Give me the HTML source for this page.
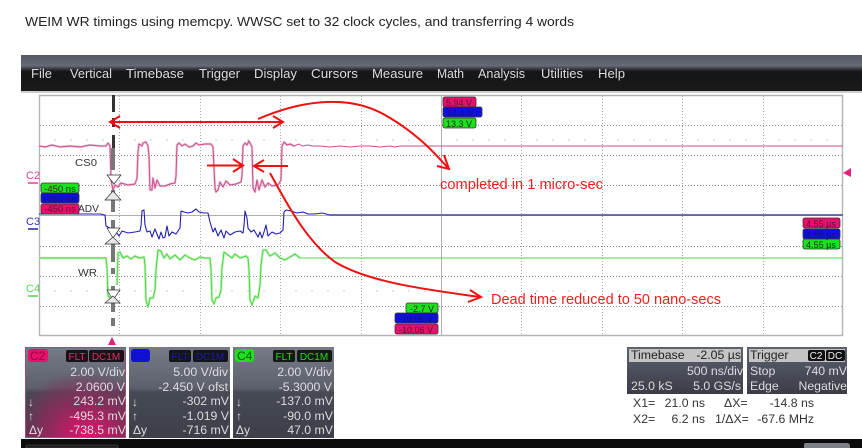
<!DOCTYPE html>
<html>
<head>
<meta charset="utf-8">
<style>
html,body{margin:0;padding:0;background:#fff;width:862px;height:448px;overflow:hidden}
svg{display:block;filter:blur(.3px)}
text{font-family:"Liberation Sans",sans-serif}
</style>
</head>
<body>
<svg width="862" height="448" viewBox="0 0 862 448" xmlns="http://www.w3.org/2000/svg">
<defs>
<linearGradient id="menu" x1="0" y1="0" x2="0" y2="1">
<stop offset="0" stop-color="#555968"/><stop offset=".3" stop-color="#666a76"/><stop offset=".38" stop-color="#3a3c44"/><stop offset=".46" stop-color="#141518"/><stop offset="1" stop-color="#1a1a1a"/>
</linearGradient>
<linearGradient id="panel" x1="0" y1="0" x2="0" y2="1">
<stop offset="0" stop-color="#777b88"/><stop offset=".45" stop-color="#5d606c"/><stop offset=".5" stop-color="#474a54"/><stop offset="1" stop-color="#3c3e48"/>
</linearGradient>
<radialGradient id="pink" cx=".6" cy="1" r=".75">
<stop offset="0" stop-color="#e8106e"/><stop offset=".5" stop-color="#8e2a5c"/><stop offset="1" stop-color="#8e2a5c" stop-opacity="0"/>
</radialGradient>
<linearGradient id="tb" x1="0" y1="0" x2="0" y2="1">
<stop offset="0" stop-color="#5d6170"/><stop offset="1" stop-color="#3a3c46"/>
</linearGradient>
</defs>

<rect width="862" height="448" fill="#fff"/>
<text x="25" y="26" font-size="13" fill="#222" textLength="549" lengthAdjust="spacingAndGlyphs">WEIM WR timings using memcpy. WWSC set to 32 clock cycles, and transferring 4 words</text>

<!-- menu bar -->
<rect x="21" y="55" width="841" height="36" fill="url(#menu)"/>
<rect x="21" y="91" width="841" height="2" fill="#ccc"/>
<g font-size="12.500" fill="#dcdcdc">
<text x="31" y="78" textLength="21" lengthAdjust="spacingAndGlyphs">File</text>
<text x="70" y="78" textLength="42" lengthAdjust="spacingAndGlyphs">Vertical</text>
<text x="126" y="78" textLength="58" lengthAdjust="spacingAndGlyphs">Timebase</text>
<text x="199" y="78" textLength="41" lengthAdjust="spacingAndGlyphs">Trigger</text>
<text x="254" y="78" textLength="43" lengthAdjust="spacingAndGlyphs">Display</text>
<text x="311" y="78" textLength="47" lengthAdjust="spacingAndGlyphs">Cursors</text>
<text x="372" y="78" textLength="51" lengthAdjust="spacingAndGlyphs">Measure</text>
<text x="437" y="78" textLength="27" lengthAdjust="spacingAndGlyphs">Math</text>
<text x="478" y="78" textLength="47" lengthAdjust="spacingAndGlyphs">Analysis</text>
<text x="541" y="78" textLength="42" lengthAdjust="spacingAndGlyphs">Utilities</text>
<text x="598" y="78" textLength="27" lengthAdjust="spacingAndGlyphs">Help</text>
</g>

<!-- grid -->
<g stroke="#a8a8a8" stroke-width="1" stroke-dasharray="1 2" fill="none">
<path d="M119.500 96V335M200.500 96V335M280.500 96V335M361.500 96V335M521.500 96V335M602.500 96V335M682.500 96V335M763.500 96V335"/>
<path d="M40 125.500H842M40 155.500H842M40 185.500H842M40 246.500H842M40 276.500H842M40 306.500H842" stroke="#888"/>
</g>
<path d="M441.500 96V335M40 215.500H842" stroke="#b0b0b0" stroke-width="1"/>
<path d="M39 95.500H843M39.500 95V336M39 335.500H843M842.500 95V336" stroke="#b4b4b4" stroke-width="1.400" fill="none"/>
<!-- ticks -->
<path d="M55 139v2M71 139v2M87 139v2M103 139v2M135 139v2M151 139v2M167 139v2M183 139v2M216 139v2M232 139v2M248 139v2M264 139v2M296 139v2M312 139v2M328 139v2M344 139v2M377 139v2M393 139v2M409 139v2M425 139v2M457 139v2M473 139v2M489 139v2M505 139v2M537 139v2M553 139v2M569 139v2M585 139v2M618 139v2M634 139v2M650 139v2M666 139v2M698 139v2M714 139v2M730 139v2M746 139v2M779 139v2M795 139v2M811 139v2M827 139v2" stroke="#ccc" stroke-width="1"/>
<path d="M55 290v2M71 290v2M87 290v2M135 290v2M151 290v2M167 290v2M183 290v2M216 290v2M232 290v2M248 290v2M264 290v2M296 290v2M312 290v2M328 290v2M344 290v2M377 290v2M393 290v2M409 290v2M425 290v2M457 290v2M473 290v2M489 290v2M505 290v2M537 290v2M553 290v2M569 290v2M585 290v2M618 290v2M634 290v2M650 290v2M666 290v2" stroke="#ccc" stroke-width="1"/>

<!-- pink trace -->
<g fill="none" stroke-linejoin="round">
<path d="M39 146L45 147L52 145L60 147L70 146L80 147L90 145L100 146L106 146L108 143L110 146L111 180L113 190L115 185L118 187L121 183L128 185L135 184L137 178L138 152L139 144L142 146L143 143L146 142L148 146L149 156L150 190L152 190L153 178L155 188L157 180L160 186L165 186L170 184L175 183L176 176L177 145L179 143L182 146L185 144L189 147L193 146L196 143L199 145L205 144L211 144L213 147L215 188L216 192L218 190L220 182L223 187L226 181L230 185L236 184L241 182L242 176L243 146L245 143L247 145L249 141L252 147L253 188L255 192L257 180L259 190L262 180L265 187L268 183L272 186L278 185L281 180L282 146L284 142L287 145L290 144L294 146" stroke="#e8a8c8" stroke-width="2.400" opacity=".7"/>
<path d="M39 146L45 147L52 145L60 147L70 146L80 147L90 145L100 146L106 146L108 143L110 146L111 180L113 190L115 185L118 187L121 183L128 185L135 184L137 178L138 152L139 144L142 146L143 143L146 142L148 146L149 156L150 190L152 190L153 178L155 188L157 180L160 186L165 186L170 184L175 183L176 176L177 145L179 143L182 146L185 144L189 147L193 146L196 143L199 145L205 144L211 144L213 147L215 188L216 192L218 190L220 182L223 187L226 181L230 185L236 184L241 182L242 176L243 146L245 143L247 145L249 141L252 147L253 188L255 192L257 180L259 190L262 180L265 187L268 183L272 186L278 185L281 180L282 146L284 142L287 145L290 144L294 146L299 144L302 146L308 145L312 146L320 146L330 147L340 146L350 147L360 146L370 146L380 147L390 146L395 147L400 146L843 146" stroke="#c8508c" stroke-width="1"/>

<!-- blue trace -->
<path d="M39 214L100 214L105 215L106 226L110 228L113 233L116 232L119 236L122 231L128 233L135 232L140 231L141 226L142 211L144 210L145 225L147 232L150 231L152 237L155 229L157 234L159 239L161 232L163 238L165 237L167 226L169 236L172 232L176 234L178 231L180 228L181 211L184 212L188 213L192 212L196 209L199 212L204 213L208 213L210 222L213 232L215 228L218 236L221 230L224 238L226 231L230 235L235 232L240 231L243 233L244 226L245 211L247 218L248 228L251 232L254 230L258 237L260 232L262 238L264 232L266 225L268 236L272 232L276 234L280 233L283 230L284 212L286 210L291 211L297 213L303 212L308 214L315 214L322 213L330 215L345 215L440 215L843 215" stroke="#2020b0" stroke-width="1.100"/>
<path d="M330 215H843" stroke="#5560a8" stroke-width="1.800"/>

<!-- green trace -->
<path d="M39 258L106 258L107 268L108 296L112 300M117 285L118 253L120 252L123 258L127 256L131 259L135 256L139 258L144 257L145 265L146 300L148 307L150 298L153 298L155 290L156 270L158 250L161 251L164 258L167 254L170 259L175 255L180 260L185 255L190 258L195 260L200 257L205 258L210 258L211 270L212 300L214 304L216 298L219 297L221 290L222 268L224 252L228 255L232 258L235 254L240 258L246 256L248 258L249 270L250 300L252 305L255 296L258 298L260 285L261 265L263 250L266 250L270 256L275 253L280 258L285 260L290 257L295 254L300 258" stroke="#c4f0b8" stroke-width="2.600"/>
<path d="M39 258L106 258L107 268L108 296L112 300M117 285L118 253L120 252L123 258L127 256L131 259L135 256L139 258L144 257L145 265L146 300L148 307L150 298L153 298L155 290L156 270L158 250L161 251L164 258L167 254L170 259L175 255L180 260L185 255L190 258L195 260L200 257L205 258L210 258L211 270L212 300L214 304L216 298L219 297L221 290L222 268L224 252L228 255L232 258L235 254L240 258L246 256L248 258L249 270L250 300L252 305L255 296L258 298L260 285L261 265L263 250L266 250L270 256L275 253L280 258L285 260L290 257L295 254L300 258L310 258L843 258" stroke="#48d848" stroke-width="1"/>
</g>

<!-- cursor -->
<path d="M113.500 95V112M113.500 118V127M113.500 135V148" stroke="#333" stroke-width="3" fill="none"/>
<path d="M113 148V170M113 190V212M113 220V230M113 240V262M113 268V274M113 286V312M113 318V326" stroke="#777" stroke-width="4" fill="none"/>
<g fill="#fff" stroke="#333" stroke-width=".7">
<path d="M107 175L121 175L114 184z"/><path d="M105 200L113 191L121 200z" fill="#e8e8e8"/>
<path d="M107 228L113 238L120 228z"/><path d="M105 244L113 237L120 244z" fill="#e8e8e8"/>
<path d="M107 290L120 290L113 300z"/><path d="M105 303L113 296L120 303z" fill="#e8e8e8"/>
</g>
<path d="M108 345L112 337L116 345z" fill="#e0207c"/>

<!-- labels -->
<g font-size="10.500" fill="#333">
<text x="75" y="166" textLength="22" lengthAdjust="spacingAndGlyphs">CS0</text>
<text x="78" y="212" textLength="21" lengthAdjust="spacingAndGlyphs">ADV</text>
<text x="78" y="276" textLength="19" lengthAdjust="spacingAndGlyphs">WR</text>
</g>
<g font-size="11">
<text x="26" y="179" fill="#c84a90">C2</text><path d="M28 183h10" stroke="#c84a90" stroke-width="1.500"/>
<text x="26" y="225" fill="#3838a8">C3</text><path d="M28 229h10" stroke="#2020b0" stroke-width="1.500"/>
<text x="26" y="292" fill="#58d858">C4</text><path d="M28 296h10" stroke="#48d848" stroke-width="1.500"/>
</g>
<path d="M851 168L843 173L851 177z" fill="#e8207c"/>

<!-- tags left -->
<g stroke="#333" stroke-width=".8">
<rect x="41" y="183" width="38" height="10" rx="2" fill="#1ee01e"/>
<rect x="41" y="193" width="38" height="10" rx="2" fill="#1010d8"/>
<rect x="41" y="204" width="38" height="10" rx="2" fill="#e8106c"/>
</g>
<g font-size="9.500" fill="#1a2a1a" text-anchor="middle">
<text x="60" y="192">-450 ns</text><text x="60" y="202" fill="#101080">-450 ns</text><text x="60" y="212" fill="#5a1030">-450 ns</text>
</g>
<!-- tags top -->
<g stroke="#333" stroke-width=".8">
<rect x="443" y="97" width="33" height="10" rx="2" fill="#e8106c"/>
<rect x="443" y="107" width="39" height="10" rx="2" fill="#1010d8"/>
<rect x="443" y="118" width="33" height="10" rx="2" fill="#1ee01e"/>
</g>
<g font-size="9" text-anchor="middle">
<text x="459" y="106" fill="#5a1030">5.94 V</text><text x="460" y="116" fill="#101080">14.4 V</text><text x="459" y="127" fill="#1a2a1a">13.3 V</text>
</g>
<!-- tags bottom -->
<g stroke="#333" stroke-width=".8">
<rect x="406" y="303" width="32" height="10" rx="2" fill="#1ee01e"/>
<rect x="395" y="313" width="43" height="10" rx="2" fill="#1010d8"/>
<rect x="395" y="324" width="43" height="10" rx="2" fill="#e8106c"/>
</g>
<g font-size="9" text-anchor="middle">
<text x="422" y="312" fill="#1a2a1a">-2.7 V</text><text x="416" y="322" fill="#101080">-10.06 V</text><text x="416" y="333" fill="#5a1030">-10.06 V</text>
</g>
<!-- tags right -->
<g stroke="#333" stroke-width=".8">
<rect x="803" y="218" width="37" height="10" rx="2" fill="#e8106c"/>
<rect x="803" y="229" width="37" height="10" rx="2" fill="#1010d8"/>
<rect x="803" y="239" width="37" height="10" rx="2" fill="#1ee01e"/>
</g>
<g font-size="9" text-anchor="middle">
<text x="821" y="227" fill="#5a1030">4.55 µs</text><text x="821" y="238" fill="#101080">4.55 µs</text><text x="821" y="248" fill="#1a2a1a">4.55 µs</text>
</g>

<!-- red annotations -->
<g fill="none" stroke="#f01010" stroke-width="2">
<path d="M111 122H283"/><path d="M120 116L110 122L120 128"/><path d="M273 116L283 122L273 128"/>
<path d="M258 119C295 103 345 92 385 115C415 132 432 150 448 168"/><path d="M444 155L449 169L437 166"/>
<path d="M207 165.500H242"/><path d="M233 159L243 165.500L233 172"/>
<path d="M288 166H255"/><path d="M264 160L254 166L264 172"/>
<path d="M270 173C285 200 305 240 335 262C370 283 430 290 480 297"/><path d="M470 290L481 297L468 302"/>
</g>
<text x="440" y="189" font-size="15" fill="#f02020" textLength="163" lengthAdjust="spacingAndGlyphs">completed in 1 micro-sec</text>
<text x="491" y="304" font-size="15" fill="#f02020" textLength="230" lengthAdjust="spacingAndGlyphs">Dead time reduced to 50 nano-secs</text>

<!-- channel panels -->
<rect x="25" y="347" width="101" height="91" fill="url(#panel)"/>
<rect x="25" y="347" width="101" height="91" fill="url(#pink)"/>
<rect x="25.500" y="347.500" width="100" height="90" fill="none" stroke="#a04880"/>
<rect x="129" y="347" width="101" height="91" fill="url(#panel)"/>
<rect x="233" y="347" width="101" height="91" fill="url(#panel)"/>
<rect x="28" y="349" width="20" height="13" rx="3" fill="#e8106c"/>
<rect x="131" y="349" width="19" height="13" rx="3" fill="#1010e0"/>
<rect x="235" y="349" width="19" height="13" rx="3" fill="#1ee01e"/>
<text x="30" y="360" font-size="12" fill="#900840">C2</text>
<text x="133" y="360" font-size="12" fill="#1010a0">C3</text>
<text x="237" y="360" font-size="12" fill="#0a5a0a">C4</text>

<rect x="66" y="350" width="22" height="12" rx="2" fill="#1a1216"/><rect x="89" y="350" width="35" height="12" rx="2" fill="#1a1216"/>
<rect x="169" y="350" width="22" height="12" rx="2" fill="#14141c"/><rect x="193" y="350" width="35" height="12" rx="2" fill="#14141c"/>
<rect x="273" y="350" width="22" height="12" rx="2" fill="#121a12"/><rect x="297" y="350" width="35" height="12" rx="2" fill="#121a12"/>
<g font-size="10" text-anchor="middle">
<text x="77" y="360" fill="#e0306c">FLT</text><text x="106" y="360" fill="#e0306c">DC1M</text>
<text x="180" y="360" fill="#1a1ab0">FLT</text><text x="210" y="360" fill="#1a1ab0">DC1M</text>
<text x="284" y="360" fill="#28d828">FLT</text><text x="314" y="360" fill="#28d828">DC1M</text>
</g>

<g font-size="12.300" fill="#dcdce0" text-anchor="end">
<text x="125" y="376">2.00 V/div</text><text x="125" y="391">2.0600 V</text><text x="126" y="405">243.2 mV</text><text x="126" y="420">-495.3 mV</text><text x="126" y="434">-738.5 mV</text>
<text x="228" y="376">5.00 V/div</text><text x="228" y="391">-2.450 V ofst</text><text x="229" y="405">-302 mV</text><text x="229" y="420">-1.019 V</text><text x="229" y="434">-716 mV</text>
<text x="332" y="376">2.00 V/div</text><text x="332" y="391">-5.3000 V</text><text x="333" y="405">-137.0 mV</text><text x="333" y="420">-90.0 mV</text><text x="333" y="434">47.0 mV</text>
</g>
<g font-size="12" fill="#dcdce0">
<text x="28" y="406">↓</text><text x="28" y="420">↑</text><text x="29" y="434">Δy</text>
<text x="132" y="406">↓</text><text x="132" y="420">↑</text><text x="133" y="434">Δy</text>
<text x="236" y="406">↓</text><text x="236" y="420">↑</text><text x="236" y="434">Δy</text>
</g>

<!-- timebase/trigger -->
<rect x="627" y="347" width="116" height="47" fill="url(#tb)"/>
<rect x="747" y="347" width="100" height="47" fill="url(#tb)"/>
<rect x="629" y="349" width="112" height="13" fill="#c4c4c4"/>
<rect x="749" y="349" width="96" height="13" fill="#c4c4c4"/>
<rect x="808" y="350" width="17" height="11" rx="2" fill="#111"/><rect x="826" y="350" width="19" height="11" rx="2" fill="#111"/>
<g font-size="12.300">
<text x="631" y="359" fill="#222">Timebase</text>
<text x="741" y="359" fill="#222" text-anchor="end">-2.05 µs</text>
<text x="750" y="359" fill="#222">Trigger</text>
<text x="816" y="359" fill="#eee" text-anchor="middle" font-size="10">C2</text>
<text x="835" y="359" fill="#eee" text-anchor="middle" font-size="10">DC</text>
<text x="743" y="375" fill="#dcdce0" text-anchor="end">500 ns/div</text>
<text x="750" y="375" fill="#dcdce0">Stop</text>
<text x="847" y="375" fill="#dcdce0" text-anchor="end">740 mV</text>
<text x="631" y="390" fill="#dcdce0">25.0 kS</text>
<text x="741" y="390" fill="#dcdce0" text-anchor="end">5.0 GS/s</text>
<text x="750" y="390" fill="#dcdce0">Edge</text>
<text x="847" y="390" fill="#dcdce0" text-anchor="end">Negative</text>
</g>
<g font-size="12.300" fill="#333">
<text x="633" y="407">X1=</text><text x="705" y="407" text-anchor="end">21.0 ns</text>
<text x="724" y="407">ΔX=</text><text x="814" y="407" text-anchor="end">-14.8 ns</text>
<text x="633" y="423">X2=</text><text x="705" y="423" text-anchor="end">6.2 ns</text>
<text x="715" y="423">1/ΔX=</text><text x="814" y="423" text-anchor="end">-67.6 MHz</text>
</g>

<!-- bottom band -->
<rect x="21" y="439" width="841" height="9" fill="#0c0c0c"/>
<rect x="26" y="445" width="92" height="3" rx="1" fill="#1c1c1c" stroke="#555" stroke-width=".6"/>
<path d="M804 448V445Q804 443 806 443H847Q850 443 850 446V448z" fill="#7e8088"/>
</svg>
</body>
</html>
